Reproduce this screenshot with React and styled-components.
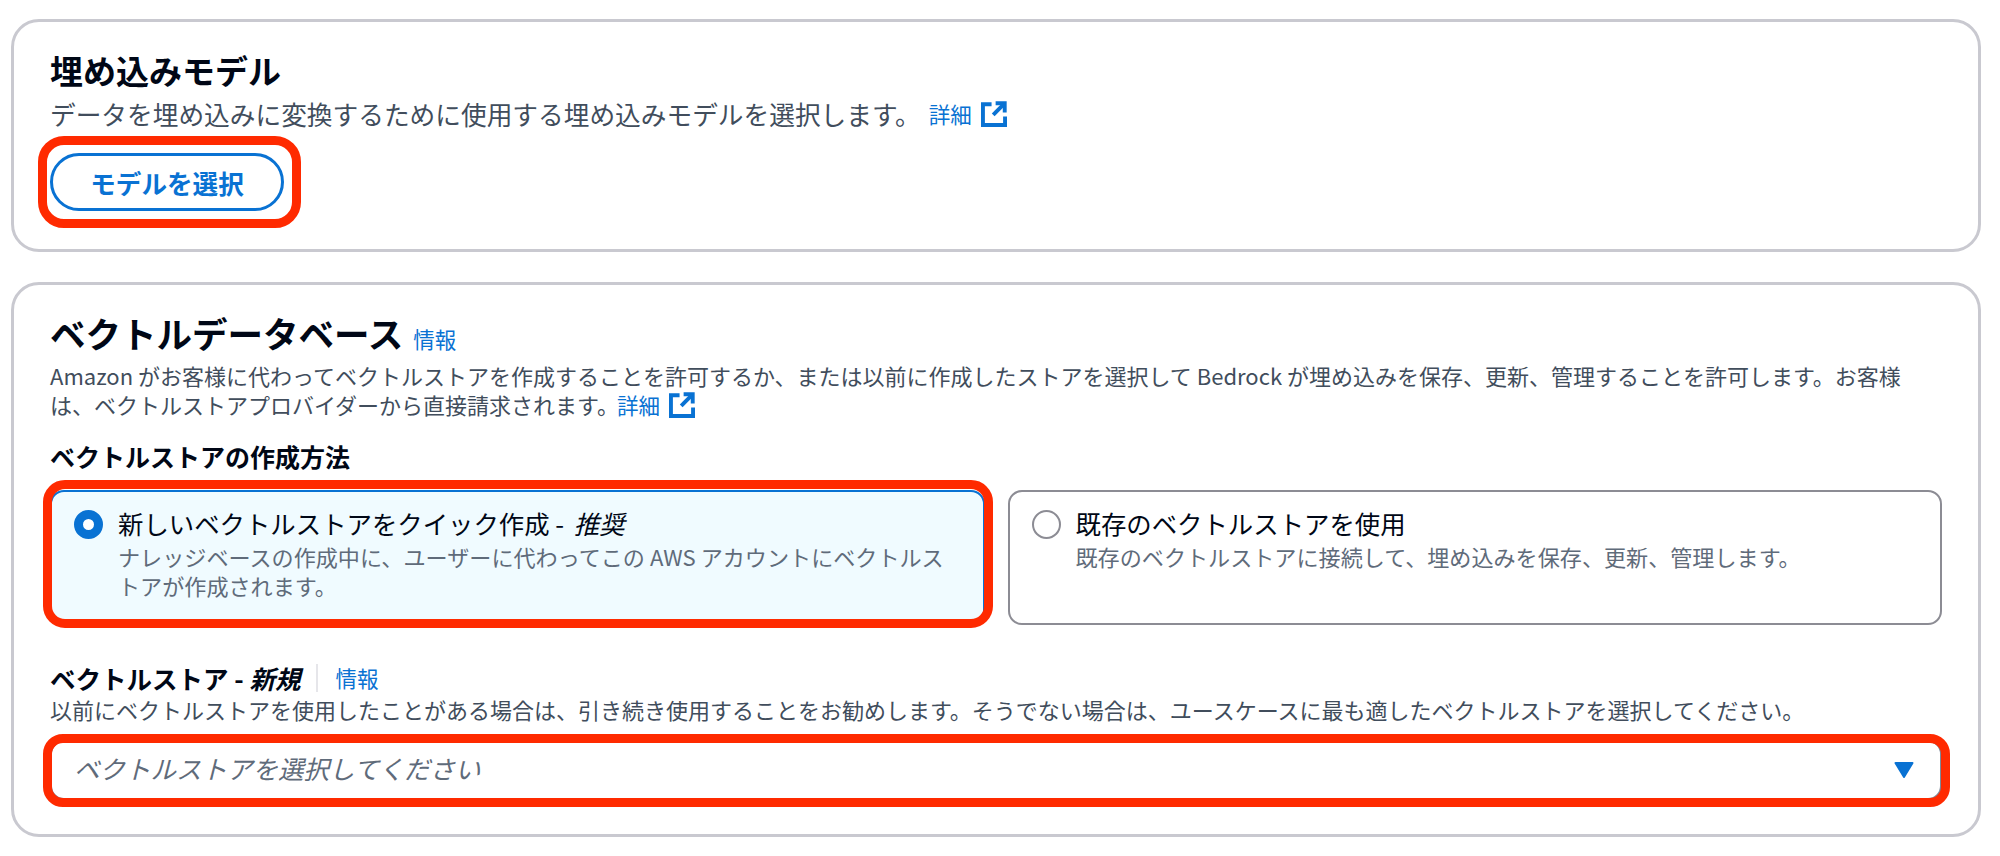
import styled, { createGlobalStyle } from "styled-components";

const GlobalStyle = createGlobalStyle`
  html, body {
    margin: 0;
    background: #ffffff;
  }
  body {
    font-family: "Noto Sans CJK JP", "Noto Sans", sans-serif;
    color: #000716;
  }
`;

const Page = styled.div`
  display: flex;
  flex-direction: column;
  gap: 30px;
  padding: 19px 19px 0 11px;
`;

const Card = styled.section`
  border: 3px solid #c9c9d0;
  border-radius: 28px;
  padding: ${(p) => p.$pad};
  background: #ffffff;
`;

const CardHeader = styled.div`
  display: flex;
  align-items: baseline;
  gap: 10px;
`;

const Title = styled.h2`
  margin: 0;
  font-size: ${(p) => p.$size};
  line-height: 46px;
  font-weight: 700;
  color: #000716;
`;

const Description = styled.p`
  margin: ${(p) => p.$margin};
  font-size: ${(p) => p.$size || "22px"};
  line-height: 29px;
  font-weight: 400;
  color: #414d5c;
  white-space: nowrap;
`;

const InfoLink = styled.a`
  color: #0972d3;
  font-size: 21.5px;
  line-height: 30px;
  font-weight: 400;
`;

const LearnMore = styled.a`
  display: inline-flex;
  align-items: center;
  gap: 9px;
  margin-left: ${(p) => p.$gap};
  color: #0972d3;
  font-size: 21.5px;
  line-height: 29px;
  vertical-align: top;
  svg {
    display: block;
  }
`;

// the red annotation frames sit on top of whatever they mark
const Marked = styled.div`
  position: relative;
  &::after {
    content: "";
    position: absolute;
    inset: ${(p) => p.$inset};
    border: 9px solid #ff2a00;
    border-radius: ${(p) => p.$radius};
    pointer-events: none;
  }
`;

const ButtonSlot = styled(Marked)`
  display: inline-block;
  margin-top: 25px;
`;

const PillButton = styled.button`
  display: block;
  width: 234px;
  height: 58px;
  padding: 0;
  border: 3px solid #0972d3;
  border-radius: 29px;
  background: #ffffff;
  color: #0972d3;
  font-family: inherit;
  font-size: 25.6px;
  font-weight: 700;
`;

const GroupLabel = styled.div`
  margin-top: 22px;
  font-size: 25px;
  line-height: 30px;
  font-weight: 700;
  color: #000716;
`;

const OptionGrid = styled.div`
  display: grid;
  grid-template-columns: 1fr 1fr;
  gap: 23px;
  margin-top: 19px;
`;

const Option = styled.div`
  display: flex;
  gap: 15px;
  height: 135px;
  box-sizing: border-box;
  padding: 16px 22px 0;
  border: 2px solid ${(p) => (p.$checked ? "#0972d3" : "#8c8c94")};
  border-radius: 14px;
  background: ${(p) => (p.$checked ? "#f0fbff" : "#ffffff")};
`;

const Radio = styled.span`
  flex: none;
  box-sizing: border-box;
  width: 29px;
  height: 29px;
  margin-top: 2px;
  border-radius: 50%;
  border: ${(p) => (p.$checked ? "9px solid #0972d3" : "2px solid #8c8c94")};
  background: #ffffff;
`;

const OptionBody = styled.div`
  min-width: 0;
`;

const OptionTitle = styled.div`
  font-size: 25.4px;
  line-height: 30px;
  color: #000716;
`;

const TitleNote = styled.em`
  margin-left: 4px;
`;

const OptionHint = styled.div`
  margin-top: 4px;
  font-size: 22.1px;
  line-height: 29px;
  color: #5f6b7a;
`;

const FieldHead = styled.div`
  display: flex;
  align-items: center;
  margin-top: 38px;
`;

const FieldLabel = styled.span`
  font-size: 25.5px;
  line-height: 30px;
  font-weight: 700;
`;

const Divider = styled.span`
  width: 2px;
  height: 28px;
  margin: 0 18px 0 15px;
  background: #e6e6ea;
`;

const SelectSlot = styled(Marked)`
  margin-top: 16px;
`;

const SelectBox = styled.div`
  display: flex;
  align-items: center;
  justify-content: space-between;
  box-sizing: border-box;
  height: 60px;
  padding: 0 26px 0 22px;
  border: 2px solid #7d8998;
  border-radius: 14px;
  background: #ffffff;
`;

const Placeholder = styled.span`
  padding-bottom: 5px;
  font-size: 25.5px;
  font-style: italic;
  color: #5f6b7a;
`;

function ExternalIcon() {
  return (
    <svg width="26" height="26" viewBox="0 0 16 16" fill="none" stroke="#0972d3" strokeWidth="2.4">
      <path d="M6.5 2H1.2v12.8H14.8V9.5" />
      <path d="M9 1.4h5.6V7" />
      <path d="M14.2 1.8L7.5 8.5" />
    </svg>
  );
}

function CaretIcon() {
  return (
    <svg width="20" height="16" viewBox="0 0 20 16">
      <path d="M1.5 1h17L10 15z" fill="#0972d3" stroke="#0972d3" strokeWidth="2" strokeLinejoin="round" />
    </svg>
  );
}

export default function App() {
  return (
    <>
      <GlobalStyle />
      <Page>
        <Card $pad="25px 36px 38px">
          <Title $size="33px">埋め込みモデル</Title>
          <Description $margin="6px 0 0" $size="25.7px">
            データを埋め込みに変換するために使用する埋め込みモデルを選択します。
            <LearnMore $gap="8px">
              詳細
              <ExternalIcon />
            </LearnMore>
          </Description>
          <div>
            <ButtonSlot $inset="-17px -17px -17px -12px" $radius="26px">
              <PillButton>モデルを選択</PillButton>
            </ButtonSlot>
          </div>
        </Card>

        <Card $pad="25px 36px 34px">
          <CardHeader>
            <Title $size="35.5px">ベクトルデータベース</Title>
            <InfoLink>情報</InfoLink>
          </CardHeader>
          <Description $margin="5px 0 0">
            Amazon がお客様に代わってベクトルストアを作成することを許可するか、または以前に作成したストアを選択して Bedrock が埋め込みを保存、更新、管理することを許可します。お客様
            <br />
            は、ベクトルストアプロバイダーから直接請求されます。
            <LearnMore $gap="-2px">
              詳細
              <ExternalIcon />
            </LearnMore>
          </Description>

          <GroupLabel>ベクトルストアの作成方法</GroupLabel>
          <OptionGrid>
            <Marked $inset="-10px -8px -3px -7px" $radius="22px">
              <Option $checked>
                <Radio $checked />
                <OptionBody>
                  <OptionTitle>
                    新しいベクトルストアをクイック作成 - <TitleNote>推奨</TitleNote>
                  </OptionTitle>
                  <OptionHint>
                    ナレッジベースの作成中に、ユーザーに代わってこの AWS アカウントにベクトルストアが作成されます。
                  </OptionHint>
                </OptionBody>
              </Option>
            </Marked>
            <Option>
              <Radio />
              <OptionBody>
                <OptionTitle>既存のベクトルストアを使用</OptionTitle>
                <OptionHint>既存のベクトルストアに接続して、埋め込みを保存、更新、管理します。</OptionHint>
              </OptionBody>
            </Option>
          </OptionGrid>

          <FieldHead>
            <FieldLabel>
              ベクトルストア - <em>新規</em>
            </FieldLabel>
            <Divider />
            <InfoLink>情報</InfoLink>
          </FieldHead>
          <Description $margin="2px 0 0">
            以前にベクトルストアを使用したことがある場合は、引き続き使用することをお勧めします。そうでない場合は、ユースケースに最も適したベクトルストアを選択してください。
          </Description>
          <SelectSlot $inset="-6px -8px -7px -7px" $radius="20px">
            <SelectBox>
              <Placeholder>ベクトルストアを選択してください</Placeholder>
              <CaretIcon />
            </SelectBox>
          </SelectSlot>
        </Card>
      </Page>
    </>
  );
}
